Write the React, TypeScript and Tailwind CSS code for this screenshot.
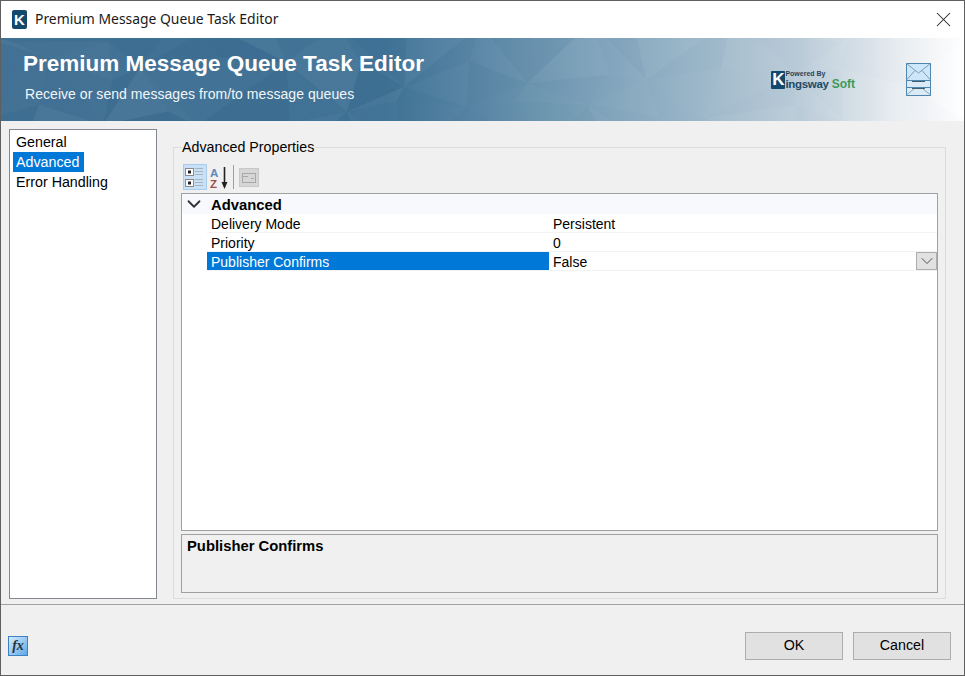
import { ChevronDown, X } from 'lucide-react';

/* Premium Message Queue Task Editor dialog */

const navItems = ['General', 'Advanced', 'Error Handling'];

const rows = [
  { name: 'Delivery Mode', value: 'Persistent' },
  { name: 'Priority', value: '0' },
  { name: 'Publisher Confirms', value: 'False', selected: true },
];

/* low-poly mesh behind the banner, fixed seed so it never changes */
function rand(n: number) {
  const v = Math.sin(n * 127.1 + 311.7) * 43758.5453;
  return v - Math.floor(v);
}

const cols = 17;
const lines = 3;
const meshPoint = (c: number, r: number) => {
  const id = c * 31 + r * 7 + 1;
  return [c * 62 - 30 + (rand(id) - 0.5) * 44, r * 42 - 8 + (rand(id + 50) - 0.5) * 30];
};

const facets: { points: string; fill: string; opacity: number }[] = [];
for (let c = 0; c < cols; c++) {
  for (let r = 0; r < lines; r++) {
    const a = meshPoint(c, r);
    const b = meshPoint(c + 1, r);
    const d = meshPoint(c, r + 1);
    const e = meshPoint(c + 1, r + 1);
    const tris = (c + r) % 2 === 0 ? [[a, b, e], [a, e, d]] : [[a, b, d], [b, e, d]];
    tris.forEach((t, i) => {
      const seed = c * 13 + r * 5 + i * 3 + 2;
      const fade = Math.max(0, 1 - (c * 62) / 900);
      facets.push({
        points: t.map((p) => p.join(',')).join(' '),
        fill: rand(seed) > 0.5 ? '#ffffff' : '#0d3553',
        opacity: (0.01 + rand(seed + 9) * 0.05) * (0.15 + fade),
      });
    });
  }
}

function AppIcon() {
  return (
    <div className="w-[15px] h-[19px] rounded-[2px] bg-[#14496e] flex items-center justify-center text-white font-bold text-[15px] leading-none">
      K
    </div>
  );
}

function HeaderTexture() {
  return (
    <svg className="absolute inset-0 w-full h-full" viewBox="0 0 965 83" aria-hidden="true">
      {facets.map((f, i) => (
        <polygon key={i} points={f.points} fill={f.fill} opacity={f.opacity} />
      ))}
    </svg>
  );
}

function MailStackIcon() {
  return (
    <svg width="25" height="33" viewBox="0 0 25 33" aria-hidden="true">
      <rect x="0.5" y="17.5" width="24" height="15" fill="#dbeaf5" stroke="#4f86ad" />
      <path d="M0.5 32 L8 26 M24.5 32 L17 26" stroke="#8aa9bf" fill="none" />
      <path d="M6 25.5 H19" stroke="#40606f" />
      <path d="M0.5 24.5 H24.5" stroke="#4f86ad" />
      <path d="M6 18.5 H19" stroke="#40606f" />
      <rect x="0.5" y="0.5" width="24" height="17" fill="#cde6f9" stroke="#4f86ad" />
      <path d="M0.5 0.5 L12.5 10 L24.5 0.5 M0.5 17 L9 7.5 M24.5 17 L16 7.5" fill="none" stroke="#7c9db5" />
    </svg>
  );
}

function CategorizedIcon() {
  return (
    <svg width="20" height="22" viewBox="0 0 20 22" aria-hidden="true">
      <rect x="0.5" y="2.5" width="8" height="7" fill="#fff" stroke="#8a8a8a" />
      <rect x="0.5" y="13.5" width="8" height="7" fill="#fff" stroke="#8a8a8a" />
      <rect x="3" y="4.5" width="3" height="3" fill="#222" />
      <rect x="3" y="15.5" width="3" height="3" fill="#222" />
      <path d="M10 2.5 H18 M10 5.5 H18 M10 8.5 H18 M10 13.5 H18 M10 16.5 H18 M10 19.5 H18" stroke="#a9b4bc" />
    </svg>
  );
}

function SortIcon() {
  return (
    <svg width="22" height="24" viewBox="0 0 22 24" aria-hidden="true">
      <text x="1" y="11" fontFamily="Liberation Sans, sans-serif" fontSize="11.5" fontWeight="700" fill="#5c86bd">A</text>
      <text x="1" y="22" fontFamily="Liberation Sans, sans-serif" fontSize="11.5" fontWeight="700" fill="#a04a4a">Z</text>
      <path d="M15.5 1 V18" stroke="#222" strokeWidth="1.6" />
      <path d="M12.5 16 H18.5 L15.5 23 Z" fill="#222" />
    </svg>
  );
}

function PagesIcon() {
  return (
    <svg width="20" height="19" viewBox="0 0 20 19" aria-hidden="true">
      <rect x="0.5" y="0.5" width="19" height="18" fill="#d6d6d6" stroke="#c8c8c8" />
      <rect x="3.5" y="5.5" width="13" height="9" fill="none" stroke="#a8a8a8" />
      <path d="M3.5 8.5 H9 M12 10.5 H15" stroke="#a8a8a8" />
    </svg>
  );
}

function FxIcon() {
  return (
    <div className="w-[20px] h-[20px] border border-[#3b82c4] bg-gradient-to-br from-[#d6eafa] to-[#5aa9e6] flex items-center justify-center">
      <span className="font-['Liberation_Serif',serif] italic font-bold text-[14px] leading-none text-[#26343f]">fx</span>
    </div>
  );
}

export default function App() {
  return (
    <div className="w-[965px] h-[676px] bg-[#f0f0f0] border border-[#5f5f5f] flex flex-col overflow-hidden font-['Liberation_Sans',sans-serif] text-[14.25px] text-black">
      {/* Title bar */}
      <div className="h-[37px] bg-white flex items-center pl-[11px] shrink-0">
        <AppIcon />
        <span className="ml-[8px] font-['Noto_Sans',sans-serif] text-[13.9px] text-[#1a1a1a]">Premium Message Queue Task Editor</span>
        <X className="ml-auto mr-[8px] text-[#222]" size={25} strokeWidth={1} />
      </div>

      {/* Banner */}
      <div className="relative h-[83px] shrink-0 bg-[linear-gradient(90deg,#3f6f93_0%,#3f7296_40%,#7fa3bb_62%,#bccdd9_83%,#e8edf1_93%,#ffffff_100%)] overflow-hidden">
        <HeaderTexture />
        <div className="relative flex h-full">
          <div className="pl-[22px] pt-[13px]">
            <div className="text-white font-bold text-[22.5px] leading-[26px]">Premium Message Queue Task Editor</div>
            <div className="text-[#f2f6f9] text-[14px] leading-[16px] mt-[9px] ml-[2px] tracking-[0.05px]">Receive or send messages from/to message queues</div>
          </div>
          <div className="ml-auto flex items-start">
            <div className="flex items-start pt-[33px]">
              <div className="w-[14px] h-[18px] rounded-[1px] bg-[#14496e] text-white font-bold text-[17px] leading-[18px] text-center">K</div>
              <div className="flex flex-col">
                <span className="text-[7px] leading-[8px] text-[#28455c] font-bold mt-[-1px] whitespace-nowrap">Powered By</span>
                <span className="text-[11.5px] leading-[14px] mt-[-1px] font-bold whitespace-nowrap">
                  <span className="text-[#1f4a68] tracking-[-0.3px]">ingsway</span>
                  <span className="text-[#3d9a5b] text-[12px] ml-[3px]">Soft</span>
                </span>
              </div>
            </div>
            <div className="ml-[51px] mr-[33px] mt-[25px]">
              <MailStackIcon />
            </div>
          </div>
        </div>
      </div>

      {/* Body */}
      <div className="flex-1 min-h-0 flex pl-[8px] pr-[18px] pt-[8px] pb-[5px] gap-[16px]">
        <div className="w-[148px] border border-[#828790] bg-white pt-[2px] pl-[3px]">
          {navItems.map((item) => (
            <div
              key={item}
              className={`h-[20px] leading-[20px] pl-[3px] pr-[5px] w-fit ${item === 'Advanced' ? 'bg-[#0078d7] text-white' : ''}`}
            >
              {item}
            </div>
          ))}
        </div>

        <fieldset className="flex-1 min-w-0 border border-[#dcdcdc] mt-[10px] px-[7px] pb-[5px] flex flex-col">
          <legend className="px-[1px] leading-[16px]">Advanced Properties</legend>

          <div className="h-[26px] flex items-center shrink-0 mt-[9px] pl-[2px]">
            <div className="w-[24px] h-[26px] bg-[#c9e0f7] border border-[#a9cdea] flex items-center justify-center">
              <CategorizedIcon />
            </div>
            <div className="ml-[2px] mt-[1px]">
              <SortIcon />
            </div>
            <div className="w-px h-[24px] bg-[#a0a0a0] ml-[2px]" />
            <div className="ml-[5px]">
              <PagesIcon />
            </div>
          </div>

          <div className="flex-1 min-h-0 mt-[3px] border border-[#a0a0a0] bg-white text-[14px]">
            <div className="h-[20px] flex items-center bg-[#f7f9fd]">
              <div className="w-[12px] ml-[6px] flex justify-center">
                <ChevronDown className="shrink-0 text-[#333]" size={22} strokeWidth={2} />
              </div>
              <span className="ml-[11px] font-bold text-[14.8px] pt-[2px]">Advanced</span>
            </div>
            {rows.map((row) => (
              <div key={row.name} className="relative ml-[25px] h-[19px] flex border-b border-[#f3f3f3]">
                <div className={`w-[342px] pl-[4px] leading-[20px] ${row.selected ? 'bg-[#0078d7] text-white' : ''}`}>{row.name}</div>
                <div className="flex-1 pl-[4px] leading-[20px]">{row.value}</div>
                {row.selected && (
                  <div className="absolute right-0 top-0 w-[21px] h-[18px] bg-[#e1e1e1] border border-[#adadad] flex items-center justify-center">
                    <ChevronDown className="shrink-0 text-[#333]" size={20} strokeWidth={1} />
                  </div>
                )}
              </div>
            ))}
          </div>

          <div className="h-[59px] shrink-0 mt-[3px] border border-[#a0a0a0] px-[5px] pt-[2px] font-bold text-[14.8px] leading-[18px]">Publisher Confirms</div>
        </fieldset>
      </div>

      {/* Footer */}
      <div className="h-[71px] shrink-0 border-t border-[#a0a0a0] flex items-center pl-[7px] pr-[13px]">
        <div className="mt-[12px]">
          <FxIcon />
        </div>
        <div className="ml-auto flex gap-[10px] mt-[12px]">
          <button className="w-[98px] h-[28px] bg-[#e1e1e1] border border-[#adadad]">OK</button>
          <button className="w-[98px] h-[28px] bg-[#e1e1e1] border border-[#adadad]">Cancel</button>
        </div>
      </div>
    </div>
  );
}
